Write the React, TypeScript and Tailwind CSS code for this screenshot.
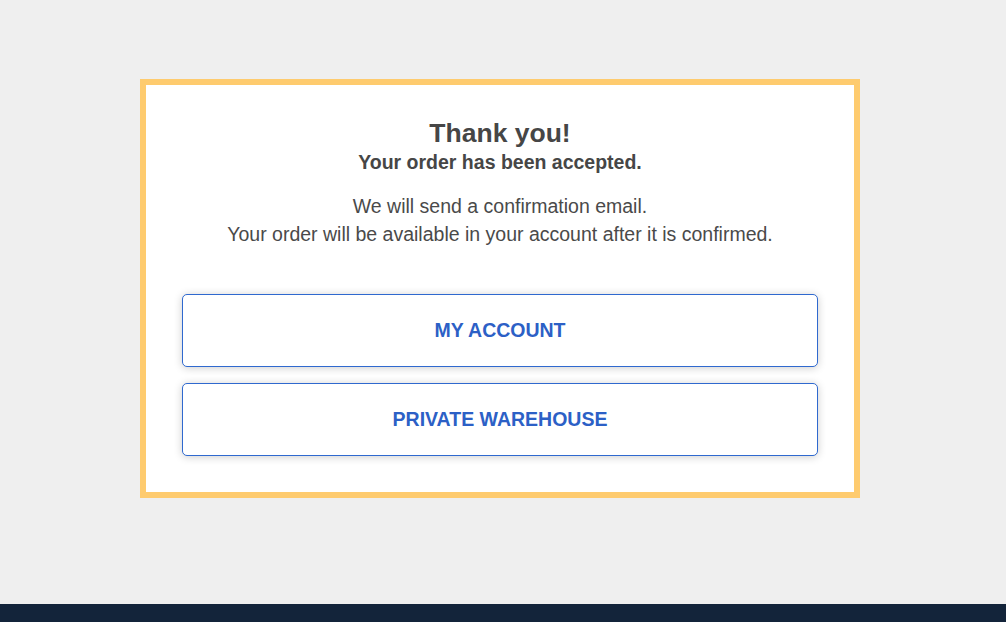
import React from "react";

export default function App() {
  return (
    <div className="w-[1006px] h-[622px] flex flex-col bg-[#efefef]" style={{ fontFamily: '"Liberation Sans", Arial, sans-serif' }}>
      <div className="h-[604px] pt-[79px] pl-[140px]">
        <div className="w-[720px] h-[419px] border-[6px] border-[#fecb6e] bg-white px-[36px] pt-[33px] text-[#464646]">
          <div className="text-center">
            <h1 className="text-[26.5px] leading-[30px] font-bold">Thank you!</h1>
            <p className="text-[19.5px] leading-[24px] font-bold mt-[2px]">Your order has been accepted.</p>
            <div className="mt-[18px] text-[19.5px] leading-[28px] text-[#4a4a4a]">
              <p>We will send a confirmation email.</p>
              <p>Your order will be available in your account after it is confirmed.</p>
            </div>
          </div>
          <div className="mt-[46px] flex flex-col gap-[16px]">
            <button className="h-[73px] w-full rounded-[5px] border border-[#2f69cf] bg-white text-[#2c60c6] text-[19.5px] font-bold uppercase shadow-[0_1px_8px_rgba(0,0,0,0.2)]">
              My Account
            </button>
            <button className="h-[73px] w-full rounded-[5px] border border-[#2f69cf] bg-white text-[#2c60c6] text-[19.5px] font-bold uppercase shadow-[0_1px_8px_rgba(0,0,0,0.2)]">
              Private Warehouse
            </button>
          </div>
        </div>
      </div>
      <div className="h-[18px] bg-[#13243a]" />
    </div>
  );
}
